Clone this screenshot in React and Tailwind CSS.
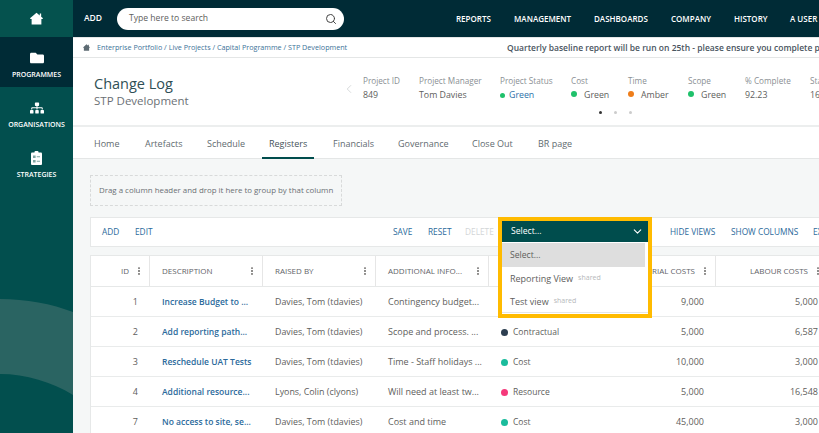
import { Search, ChevronDown, ChevronLeft, EllipsisVertical } from 'lucide-react';
import { FaFolder, FaSitemap } from 'react-icons/fa';

const topLinks = [
  ['REPORTS', 'w-[58px]'],
  ['MANAGEMENT', 'w-[80px]'],
  ['DASHBOARDS', 'w-[77px]'],
  ['COMPANY', 'w-[63px]'],
  ['HISTORY', 'w-[56px]'],
  ['A USER', 'w-[40px]'],
];

const tabs = [
  ['Home', 'w-[51px]'],
  ['Artefacts', 'w-[62px]'],
  ['Schedule', 'w-[62px]'],
  ['Registers', 'w-[52px] mr-[12px]'],
  ['Financials', 'w-[65px]'],
  ['Governance', 'w-[74px]'],
  ['Close Out', 'w-[66px]'],
  ['BR page', 'w-[60px]'],
];

const rows = [
  { id: 1, desc: 'Increase Budget to ...', by: 'Davies, Tom (tdavies)', info: 'Contingency budget...', dot: '', cat: '', mat: '9,000', lab: '5,000' },
  { id: 2, desc: 'Add reporting path...', by: 'Davies, Tom (tdavies)', info: 'Scope and process. ...', dot: 'bg-[#2c3e50]', cat: 'Contractual', mat: '5,000', lab: '6,587' },
  { id: 3, desc: 'Reschedule UAT Tests', by: 'Davies, Tom (tdavies)', info: 'Time - Staff holidays ...', dot: 'bg-[#1abc9c]', cat: 'Cost', mat: '10,000', lab: '3,000' },
  { id: 4, desc: 'Additional resource...', by: 'Lyons, Colin (clyons)', info: 'Will need at least tw...', dot: 'bg-[#f5397b]', cat: 'Resource', mat: '5,000', lab: '16,548' },
  { id: 7, desc: 'No access to site, se...', by: 'Davies, Tom (tdavies)', info: 'Cost and time', dot: 'bg-[#1abc9c]', cat: 'Cost', mat: '45,000', lab: '3,000' },
];

function HomeIcon({ size, className }) {
  return (
    <svg width={size} height={size} viewBox="0 0 12 12" className={className} fill="currentColor">
      <path d="M6 .6 9 3.2V1.4h1.3v2.9L12 5.8l-.5.6H10.5V11.6H1.5V6.4H.5L0 5.8z" />
    </svg>
  );
}

function ClipboardIcon() {
  return (
    <svg width="11" height="14" viewBox="0 0 11 14">
      <rect x="0" y="1.5" width="11" height="12.5" rx="1" fill="#fff" />
      <rect x="3.5" y="0" width="4" height="3" rx="1" fill="#fff" />
      <path d="M2 4.5h2.6v2.6H2zM5.8 5.3h3.2v1H5.800zM2 9h2.600v2.600H2zM5.800 9.800h3.200v1H5.800z" fill="#7fa6a3" />
    </svg>
  );
}

function SideItem({ icon, label, active }) {
  return (
    <div className={`h-[50px] flex flex-col items-center justify-center gap-[6px] pt-[4px] ${active ? 'bg-[#002b36]' : ''}`}>
      {icon}
      <span className="text-[7px] font-semibold leading-none text-white whitespace-nowrap">{label}</span>
    </div>
  );
}

function Kpi({ label, width, children }) {
  return (
    <div className={`shrink-0 ${width}`}>
      <p className="text-[8.2px] leading-[13px] text-[#8a8f94]">{label}</p>
      <div className="text-[8.8px] leading-[14px] pt-px text-[#605e5c] flex items-center">{children}</div>
    </div>
  );
}

function Dot({ color }) {
  return <span className={`w-[6px] h-[6px] rounded-full mr-[7px] -mt-[2px] ${color}`} />;
}

function HeadCell({ label, width, right }) {
  return (
    <div className={`shrink-0 h-full flex items-center border-r border-[#e6e6e6] pl-[12px] pr-[5px] ${width} ${right ? 'justify-end' : 'justify-between'}`}>
      <span className="text-[8px] font-medium text-[#5f6368] whitespace-nowrap">{label}</span>
      <EllipsisVertical size={10} strokeWidth={2.5} className={`text-[#605e5c] shrink-0 ${right ? 'ml-[5px]' : ''}`} />
    </div>
  );
}

export default function App() {
  return (
    <div className="w-[819px] h-[433px] flex overflow-hidden bg-white font-['Open_Sans','Noto_Sans',sans-serif]">
      {/* Sidebar */}
      <div className="relative w-[73px] shrink-0 bg-[#024f4e]">
        <svg className="absolute left-0 top-[299px]" width="73" height="96" viewBox="0 0 73 96">
          <path d="M0 0C26 0 52 5 73 13V96C52 83 26 75 0 75Z" fill="#2a6462" />
        </svg>
        <div className="relative h-[37px] flex items-center justify-center bg-[#05524e]">
          <HomeIcon size={13} className="text-white" />
        </div>
        <div className="relative">
          <SideItem active label="PROGRAMMES" icon={<FaFolder size={14} className="text-white" />} />
          <SideItem label="ORGANISATIONS" icon={<FaSitemap size={14} className="text-white" />} />
          <SideItem label="STRATEGIES" icon={<ClipboardIcon />} />
        </div>
      </div>

      <div className="w-[746px] shrink-0 flex flex-col">
        {/* Top bar */}
        <div className="h-[37px] shrink-0 bg-[#002b36] flex items-center pl-[11px]">
          <span className="w-[33px] shrink-0 text-[8.5px] font-semibold text-white">ADD</span>
          <div className="w-[227px] h-[22px] shrink-0 rounded-full bg-white flex items-center justify-between pl-[12px] pr-[7px]">
            <span className="text-[8.6px] text-[#605e5c]">Type here to search</span>
            <Search size={12} className="text-[#444]" />
          </div>
          <div className="ml-[112px] flex whitespace-nowrap">
            {topLinks.map(([name, w]) => (
              <span key={name} className={`text-[8px] font-semibold text-white ${w}`}>{name}</span>
            ))}
          </div>
        </div>

        {/* Breadcrumb */}
        <div className="h-[21px] shrink-0 border-y border-[#e4e6e6] flex items-center pl-[10px] whitespace-nowrap overflow-hidden">
          <HomeIcon size={7} className="text-[#5d6b73] shrink-0" />
          <span className="w-[410px] shrink-0 ml-[7px] text-[7.2px] text-[#3d7399]">Enterprise Portfolio / Live Projects / Capital Programme / STP Development</span>
          <span className="text-[8.5px] font-semibold text-[#4a5560] pt-px">Quarterly baseline report will be run on 25th - please ensure you complete project</span>
        </div>

        {/* Page header */}
        <div className="h-[69px] shrink-0 border-b-2 border-[#eceeee] flex pl-[21px] overflow-hidden">
          <div className="w-[250px] shrink-0 pt-[16px]">
            <h1 className="text-[14.5px] leading-[19px] text-[#2f4f55]">Change Log</h1>
            <p className="text-[11.5px] leading-[15px] text-[#6b7075]">STP Development</p>
          </div>
          <div className="relative w-[500px] shrink-0 pt-[16px] flex">
            <ChevronLeft size={14} strokeWidth={1.5} className="text-[#d0d3d5] mr-[7px] ml-[-2px] mt-[8px] shrink-0" />
            <div className="flex whitespace-nowrap">
              <Kpi label="Project ID" width="w-[56px]">849</Kpi>
              <Kpi label="Project Manager" width="w-[81px]">Tom Davies</Kpi>
              <Kpi label="Project Status" width="w-[71px]">
                <span className="w-[5px] h-[5px] rounded-full bg-[#1fc16b] mr-[4px]" />
                <span className="text-[#2b6fa8]">Green</span>
              </Kpi>
              <Kpi label="Cost" width="w-[57px]"><Dot color="bg-[#1fc16b]" />Green</Kpi>
              <Kpi label="Time" width="w-[60px]"><Dot color="bg-[#ee7d1a]" />Amber</Kpi>
              <Kpi label="Scope" width="w-[57px]"><Dot color="bg-[#1fc16b]" />Green</Kpi>
              <Kpi label="% Complete" width="w-[65px]">92.23</Kpi>
              <Kpi label="Start" width="w-[40px]">16</Kpi>
            </div>
            <div className="absolute left-[255px] top-[53px] flex gap-[12px]">
              <span className="w-[3px] h-[3px] rounded-full bg-[#333]" />
              <span className="w-[3px] h-[3px] rounded-full bg-[#ccc]" />
              <span className="w-[3px] h-[3px] rounded-full bg-[#ccc]" />
            </div>
          </div>
        </div>

        {/* Tabs */}
        <div className="h-[32px] shrink-0 border-b border-[#e4e6e6] flex pl-[14px] whitespace-nowrap">
          {tabs.map(([name, w]) => (
            <div key={name} className={`flex items-center pl-[7px] text-[9px] ${w} ${name === 'Registers' ? 'pt-[3px] border-b-2 border-[#004d4d] -mb-px text-[#45535a]' : 'pt-[2px] text-[#5f6b70]'}`}>
              {name}
            </div>
          ))}
        </div>

        {/* Content */}
        <div className="relative flex-1 bg-[#f5f7f7] pl-[17px] pt-[16px] overflow-hidden">
          <div className="w-[252px] h-[31px] border border-dashed border-[#d8dada] flex items-center pl-[8px]">
            <span className="text-[7.9px] text-[#6b7075] whitespace-nowrap">Drag a column header and drop it here to group by that column</span>
          </div>

          {/* Toolbar */}
          <div className="mt-[11px] h-[30px] w-[740px] bg-white border border-[#e6e8e8] flex items-center pl-[11px] text-[8.3px] font-medium text-[#2b6a9b] whitespace-nowrap overflow-hidden">
            <span className="w-[33px] shrink-0">ADD</span>
            <span className="w-[258px] shrink-0">EDIT</span>
            <span className="w-[35px] shrink-0">SAVE</span>
            <span className="w-[37px] shrink-0">RESET</span>
            <span className="w-[205px] shrink-0 text-[#d3d6d8]">DELETE</span>
            <span className="w-[61px] shrink-0">HIDE VIEWS</span>
            <span className="w-[82px] shrink-0">SHOW COLUMNS</span>
            <span className="shrink-0">EXPORT</span>
          </div>

          {/* Table */}
          <div className="mt-[8px] w-[800px] bg-white border border-[#e6e8e8]">
            <div className="h-[31px] flex border-b border-[#e6e8e8]">
              <HeadCell label="ID" width="w-[59px]" right />
              <HeadCell label="DESCRIPTION" width="w-[113px]" />
              <HeadCell label="RAISED BY" width="w-[113px]" />
              <HeadCell label="ADDITIONAL INFO..." width="w-[113px]" />
              <HeadCell label="CATEGORY" width="w-[113px]" />
              <HeadCell label="MATERIAL COSTS" width="w-[114px]" right />
              <HeadCell label="LABOUR COSTS" width="w-[113px]" right />
            </div>
            {rows.map((r) => (
              <div key={r.id} className="h-[30px] flex items-center pt-px border-b border-[#e9ebeb] text-[9px] text-[#605e5c] whitespace-nowrap">
                <span className="w-[59px] shrink-0 text-right pr-[12px]">{r.id}</span>
                <span className="w-[113px] shrink-0 pl-[12px] text-[8.5px] font-semibold text-[#2b6a9b]">{r.desc}</span>
                <span className="w-[113px] shrink-0 pl-[12px] text-[8.9px]">{r.by}</span>
                <span className="w-[113px] shrink-0 pl-[12px] text-[9px]">{r.info}</span>
                <span className="w-[113px] shrink-0 pl-[12px] flex items-center text-[8.5px]">
                  {r.dot && <span className={`w-[7px] h-[7px] rounded-full mr-[5px] ${r.dot}`} />}
                  {r.cat}
                </span>
                <span className="w-[114px] shrink-0 text-right pr-[12px]">{r.mat}</span>
                <span className="w-[113px] shrink-0 text-right pr-[11px]">{r.lab}</span>
              </div>
            ))}
          </div>

          {/* Views dropdown */}
          <div className="absolute left-[425px] top-[58px] w-[154px] h-[101px] border-[4px] border-[#ffbb00] bg-white">
            <div className="h-[21px] bg-[#004d4d] flex items-center justify-between pl-[9px] pr-[4px]">
              <span className="text-[8.6px] text-white">Select...</span>
              <ChevronDown size={13} className="text-white" />
            </div>
            <div className="h-[24px] w-[143px] mt-px bg-[#dedede] flex items-center pl-[8px] text-[8.6px] text-[#605e5c]">Select...</div>
            <div className="h-[23px] flex items-center pl-[8px] text-[9px] font-medium text-[#605e5c]">
              Reporting View<span className="ml-[5px] text-[7px] font-normal text-[#b5b8ba]">shared</span>
            </div>
            <div className="h-[23px] flex items-center pl-[8px] pt-px text-[9px] font-medium text-[#605e5c] border-b border-[#e4e6e6]">
              Test view<span className="ml-[5px] text-[7px] font-normal text-[#b5b8ba]">shared</span>
            </div>
          </div>
        </div>
      </div>
    </div>
  );
}
